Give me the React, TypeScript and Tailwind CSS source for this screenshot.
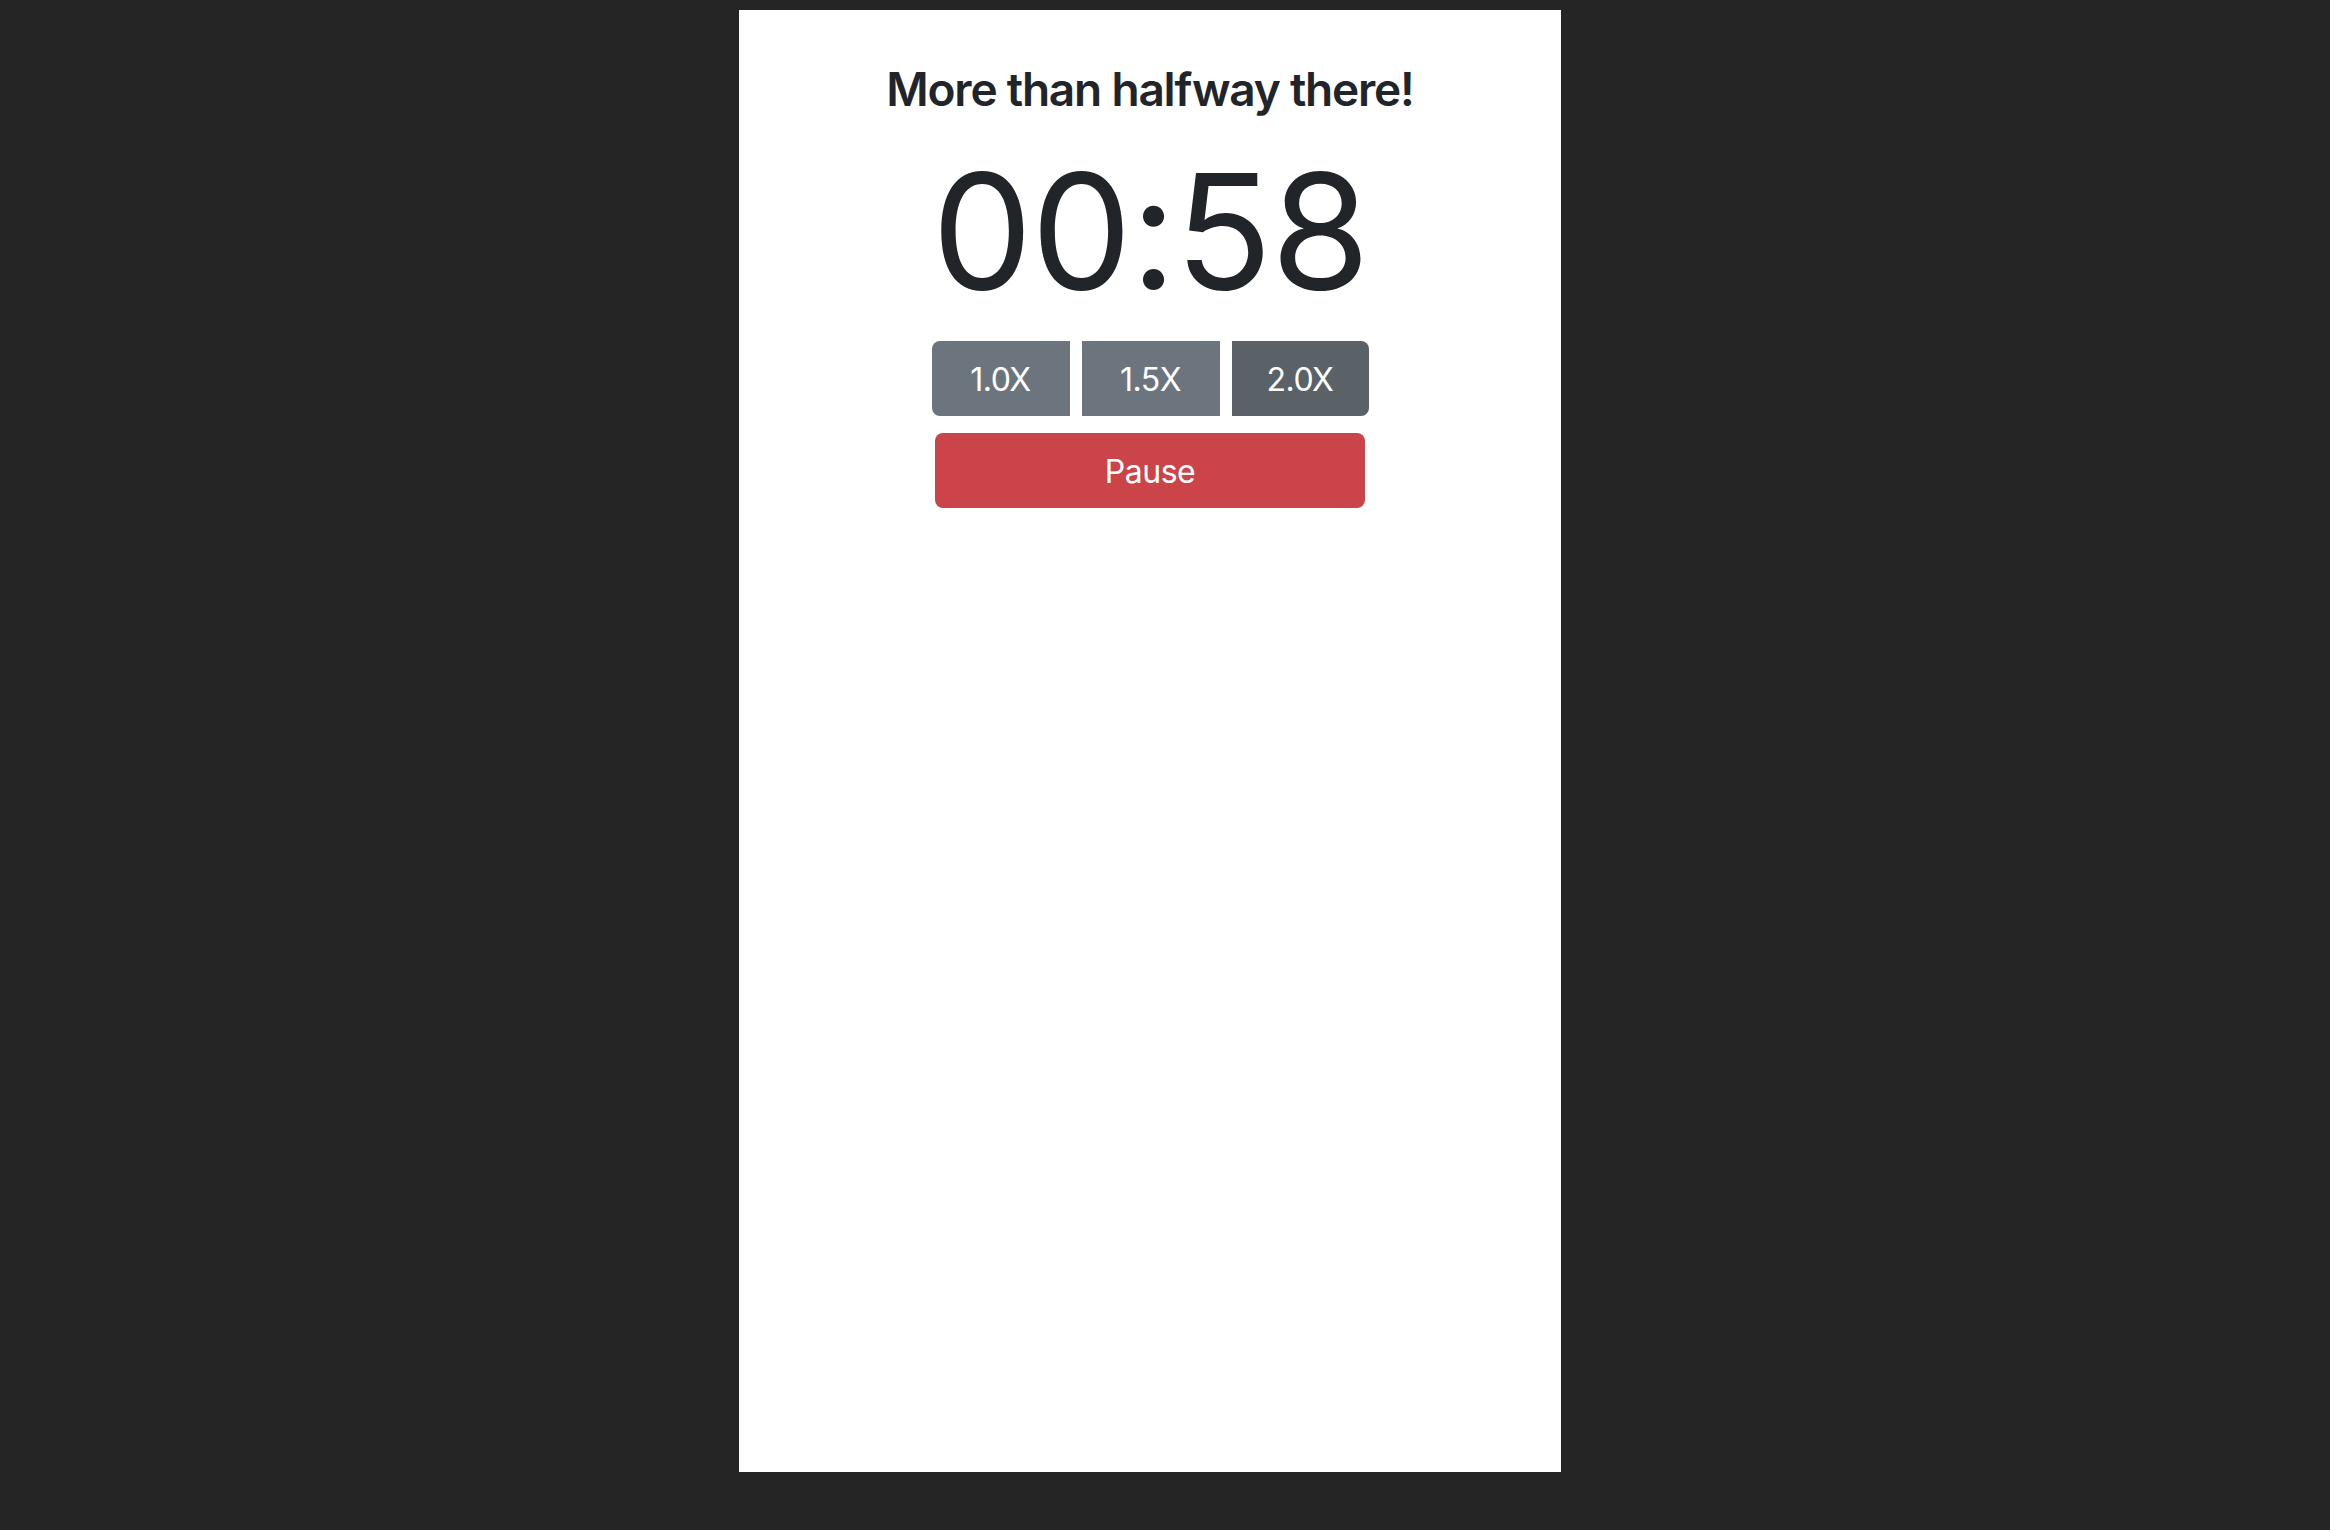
import React from "react";

export default function App() {
  return (
    <div className="min-h-[1530px] w-full bg-[#252525] pl-[739px] pt-[10px]" style={{ fontFamily: "Inter, 'Noto Sans', sans-serif" }}>
      <div className="flex h-[1462px] w-[822px] flex-col items-center bg-white text-[#212529]">
        <h2 className="mt-[51px] text-[46px] font-semibold leading-[1.25] tracking-[-1.2px]">More than halfway there!</h2>
        <div className="mt-[16px] text-[160px] font-normal leading-[1.2] tracking-[-1.5px]">00:58</div>
        <div className="mt-[14px] flex gap-[12px]">
          <button className="h-[75px] w-[138px] rounded-l-[8px] bg-[#6c757d] pt-[4px] text-[32px] tracking-[-0.5px] text-white">1.0X</button>
          <button className="h-[75px] w-[138px] bg-[#6c757d] pt-[4px] text-[32px] tracking-[-0.5px] text-white">1.5X</button>
          <button className="h-[75px] w-[137px] rounded-r-[8px] bg-[#5a6268] pt-[4px] text-[32px] tracking-[-0.5px] text-white">2.0X</button>
        </div>
        <button className="mt-[17px] h-[75px] w-[430px] rounded-[8px] bg-[#cb444a] pt-[4px] text-[32px] tracking-[-0.5px] text-white">Pause</button>
      </div>
    </div>
  );
}
